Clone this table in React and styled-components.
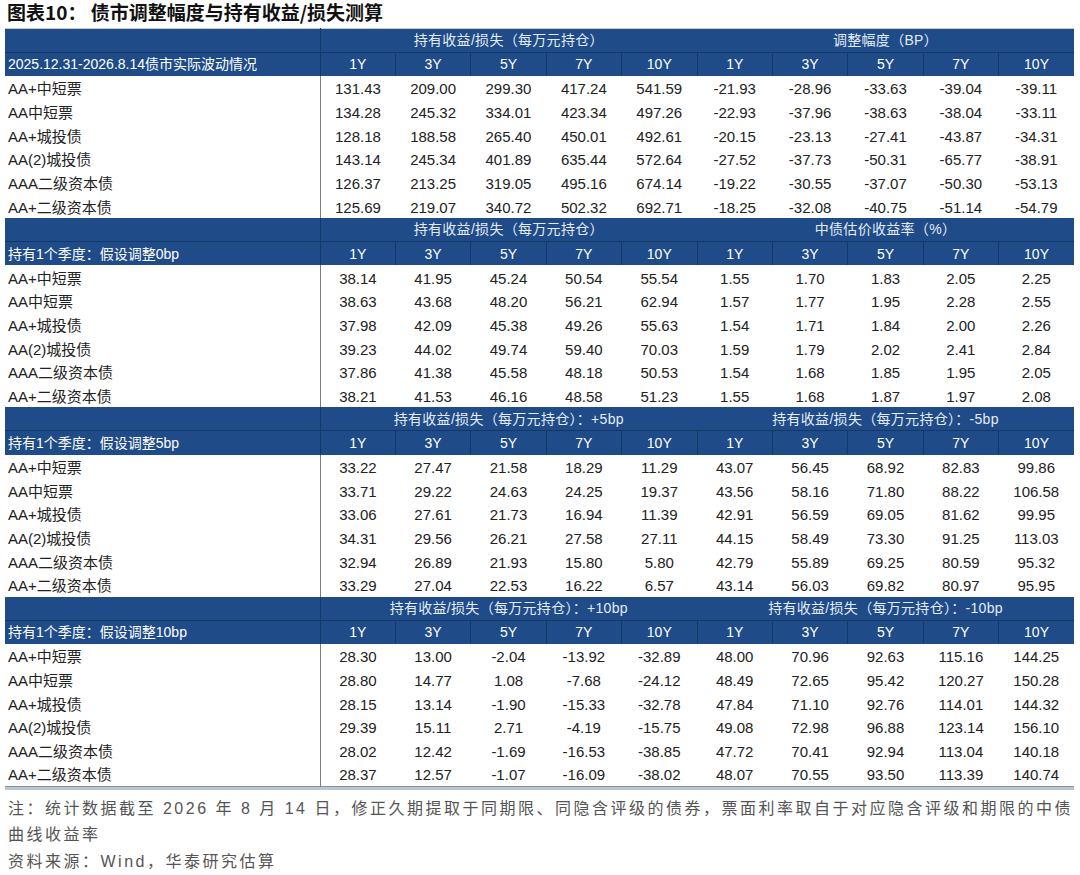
import React from 'react';
import styled, { createGlobalStyle } from 'styled-components';

const GlobalStyle = createGlobalStyle`
  html, body {
    margin: 0;
    padding: 0;
    background: #fff;
  }
  body {
    font-family: "Liberation Sans", "Noto Sans CJK SC", sans-serif;
    color: #222;
  }
`;

const Page = styled.div`
  width: 1080px;
  padding-top: 2px;
`;

const Title = styled.h1`
  margin: 0 0 0 7px;
  font-family: "Noto Sans CJK SC", sans-serif;
  font-size: 19px;
  font-weight: 700;
  line-height: 20px;
  color: #111;
`;

const Table = styled.table`
  margin: 6px 0 0 5px;
  width: 1069px;
  table-layout: fixed;
  border-collapse: collapse;
  border-top: 1px solid #c8ccd2;
  border-bottom: 1px solid #8e9296;
  box-shadow: 0 3px 0 #b9c6d3;
`;

const LabelCol = styled.col`
  width: 315px;
`;

const ValueCol = styled.col`
  width: 75.4px;
`;

const Row = styled.tr`
  height: 23.68px;
`;

const HeadRow = styled(Row)`
  background: #1f4b88;
  color: #fff;
  border-bottom: ${(p) => (p.$split ? '1px solid #143765' : 'none')};
`;

const HeadCell = styled.th`
  padding: 0;
  font-weight: 400;
  font-size: 14px;
  line-height: 22px;
  text-align: center;
  white-space: nowrap;
  border-left: ${(p) => (p.$divided ? '1px solid #143765' : 'none')};
  font-family: "Liberation Sans", "Noto Sans CJK SC", sans-serif;
`;

const HeadLabel = styled(HeadCell)`
  text-align: left;
  padding-left: 3px;
  border-left: none;
  border-right: 1px solid #143765;
`;

const GroupCell = styled(HeadCell)`
  letter-spacing: 0.3px;
  color: #e4ebf6;
`;

const LabelCell = styled.td`
  padding: 2px 0 0 3px;
  font-size: 15px;
  line-height: 21px;
  white-space: nowrap;
  border-right: 1px solid #7d7f82;
`;

const ValueCell = styled.td`
  padding: 2px 0 0;
  font-size: 15px;
  line-height: 21px;
  text-align: center;
  color: #222;
`;

const Notes = styled.div`
  margin: 9px 0 0 8px;
  width: 1072px;
  font-family: "Liberation Sans", "Noto Sans CJK SC", sans-serif;
  font-size: 16px;
  letter-spacing: 2.5px;
  line-height: 26.5px;
  color: #555;
`;

const Note = styled.p`
  margin: 0;
`;

const TENORS = ['1Y', '3Y', '5Y', '7Y', '10Y'];
const NAMES = ['AA+中短票', 'AA中短票', 'AA+城投债', 'AA(2)城投债', 'AAA二级资本债', 'AA+二级资本债'];

const BLOCKS = [
  {
    label: '2025.12.31-2026.8.14债市实际波动情况',
    groups: ['持有收益/损失（每万元持仓）', '调整幅度（BP）'],
    rows: [
      '131.43 209.00 299.30 417.24 541.59 -21.93 -28.96 -33.63 -39.04 -39.11',
      '134.28 245.32 334.01 423.34 497.26 -22.93 -37.96 -38.63 -38.04 -33.11',
      '128.18 188.58 265.40 450.01 492.61 -20.15 -23.13 -27.41 -43.87 -34.31',
      '143.14 245.34 401.89 635.44 572.64 -27.52 -37.73 -50.31 -65.77 -38.91',
      '126.37 213.25 319.05 495.16 674.14 -19.22 -30.55 -37.07 -50.30 -53.13',
      '125.69 219.07 340.72 502.32 692.71 -18.25 -32.08 -40.75 -51.14 -54.79',
    ],
  },
  {
    label: '持有1个季度：假设调整0bp',
    groups: ['持有收益/损失（每万元持仓）', '中债估价收益率（%）'],
    rows: [
      '38.14 41.95 45.24 50.54 55.54 1.55 1.70 1.83 2.05 2.25',
      '38.63 43.68 48.20 56.21 62.94 1.57 1.77 1.95 2.28 2.55',
      '37.98 42.09 45.38 49.26 55.63 1.54 1.71 1.84 2.00 2.26',
      '39.23 44.02 49.74 59.40 70.03 1.59 1.79 2.02 2.41 2.84',
      '37.86 41.38 45.58 48.18 50.53 1.54 1.68 1.85 1.95 2.05',
      '38.21 41.53 46.16 48.58 51.23 1.55 1.68 1.87 1.97 2.08',
    ],
  },
  {
    label: '持有1个季度：假设调整5bp',
    groups: ['持有收益/损失（每万元持仓）：+5bp', '持有收益/损失（每万元持仓）：-5bp'],
    rows: [
      '33.22 27.47 21.58 18.29 11.29 43.07 56.45 68.92 82.83 99.86',
      '33.71 29.22 24.63 24.25 19.37 43.56 58.16 71.80 88.22 106.58',
      '33.06 27.61 21.73 16.94 11.39 42.91 56.59 69.05 81.62 99.95',
      '34.31 29.56 26.21 27.58 27.11 44.15 58.49 73.30 91.25 113.03',
      '32.94 26.89 21.93 15.80 5.80 42.79 55.89 69.25 80.59 95.32',
      '33.29 27.04 22.53 16.22 6.57 43.14 56.03 69.82 80.97 95.95',
    ],
  },
  {
    label: '持有1个季度：假设调整10bp',
    groups: ['持有收益/损失（每万元持仓）：+10bp', '持有收益/损失（每万元持仓）：-10bp'],
    rows: [
      '28.30 13.00 -2.04 -13.92 -32.89 48.00 70.96 92.63 115.16 144.25',
      '28.80 14.77 1.08 -7.68 -24.12 48.49 72.65 95.42 120.27 150.28',
      '28.15 13.14 -1.90 -15.33 -32.78 47.84 71.10 92.76 114.01 144.32',
      '29.39 15.11 2.71 -4.19 -15.75 49.08 72.98 96.88 123.14 156.10',
      '28.02 12.42 -1.69 -16.53 -38.85 47.72 70.41 92.94 113.04 140.18',
      '28.37 12.57 -1.07 -16.09 -38.02 48.07 70.55 93.50 113.39 140.74',
    ],
  },
];

function Block({ block }) {
  const tenors = [...TENORS, ...TENORS];
  return (
    <tbody>
      <HeadRow $split>
        <HeadLabel />
        {block.groups.map((g) => (
          <GroupCell key={g} colSpan={5}>{g}</GroupCell>
        ))}
      </HeadRow>
      <HeadRow>
        <HeadLabel>{block.label}</HeadLabel>
        {tenors.map((t, i) => (
          <HeadCell key={i} $divided={i > 0}>{t}</HeadCell>
        ))}
      </HeadRow>
      {block.rows.map((r, i) => (
        <Row key={NAMES[i]}>
          <LabelCell>{NAMES[i]}</LabelCell>
          {r.split(' ').map((v, j) => (
            <ValueCell key={j}>{v}</ValueCell>
          ))}
        </Row>
      ))}
    </tbody>
  );
}

export default function App() {
  return (
    <Page>
      <GlobalStyle />
      <Title>图表10： 债市调整幅度与持有收益/损失测算</Title>
      <Table>
        <colgroup>
          <LabelCol />
          {Array.from({ length: 10 }).map((_, i) => (
            <ValueCol key={i} />
          ))}
        </colgroup>
        {BLOCKS.map((b) => (
          <Block key={b.label} block={b} />
        ))}
      </Table>
      <Notes>
        <Note>注：统计数据截至 2026 年 8 月 14 日，修正久期提取于同期限、同隐含评级的债券，票面利率取自于对应隐含评级和期限的中债曲线收益率</Note>
        <Note>资料来源：Wind，华泰研究估算</Note>
      </Notes>
    </Page>
  );
}
